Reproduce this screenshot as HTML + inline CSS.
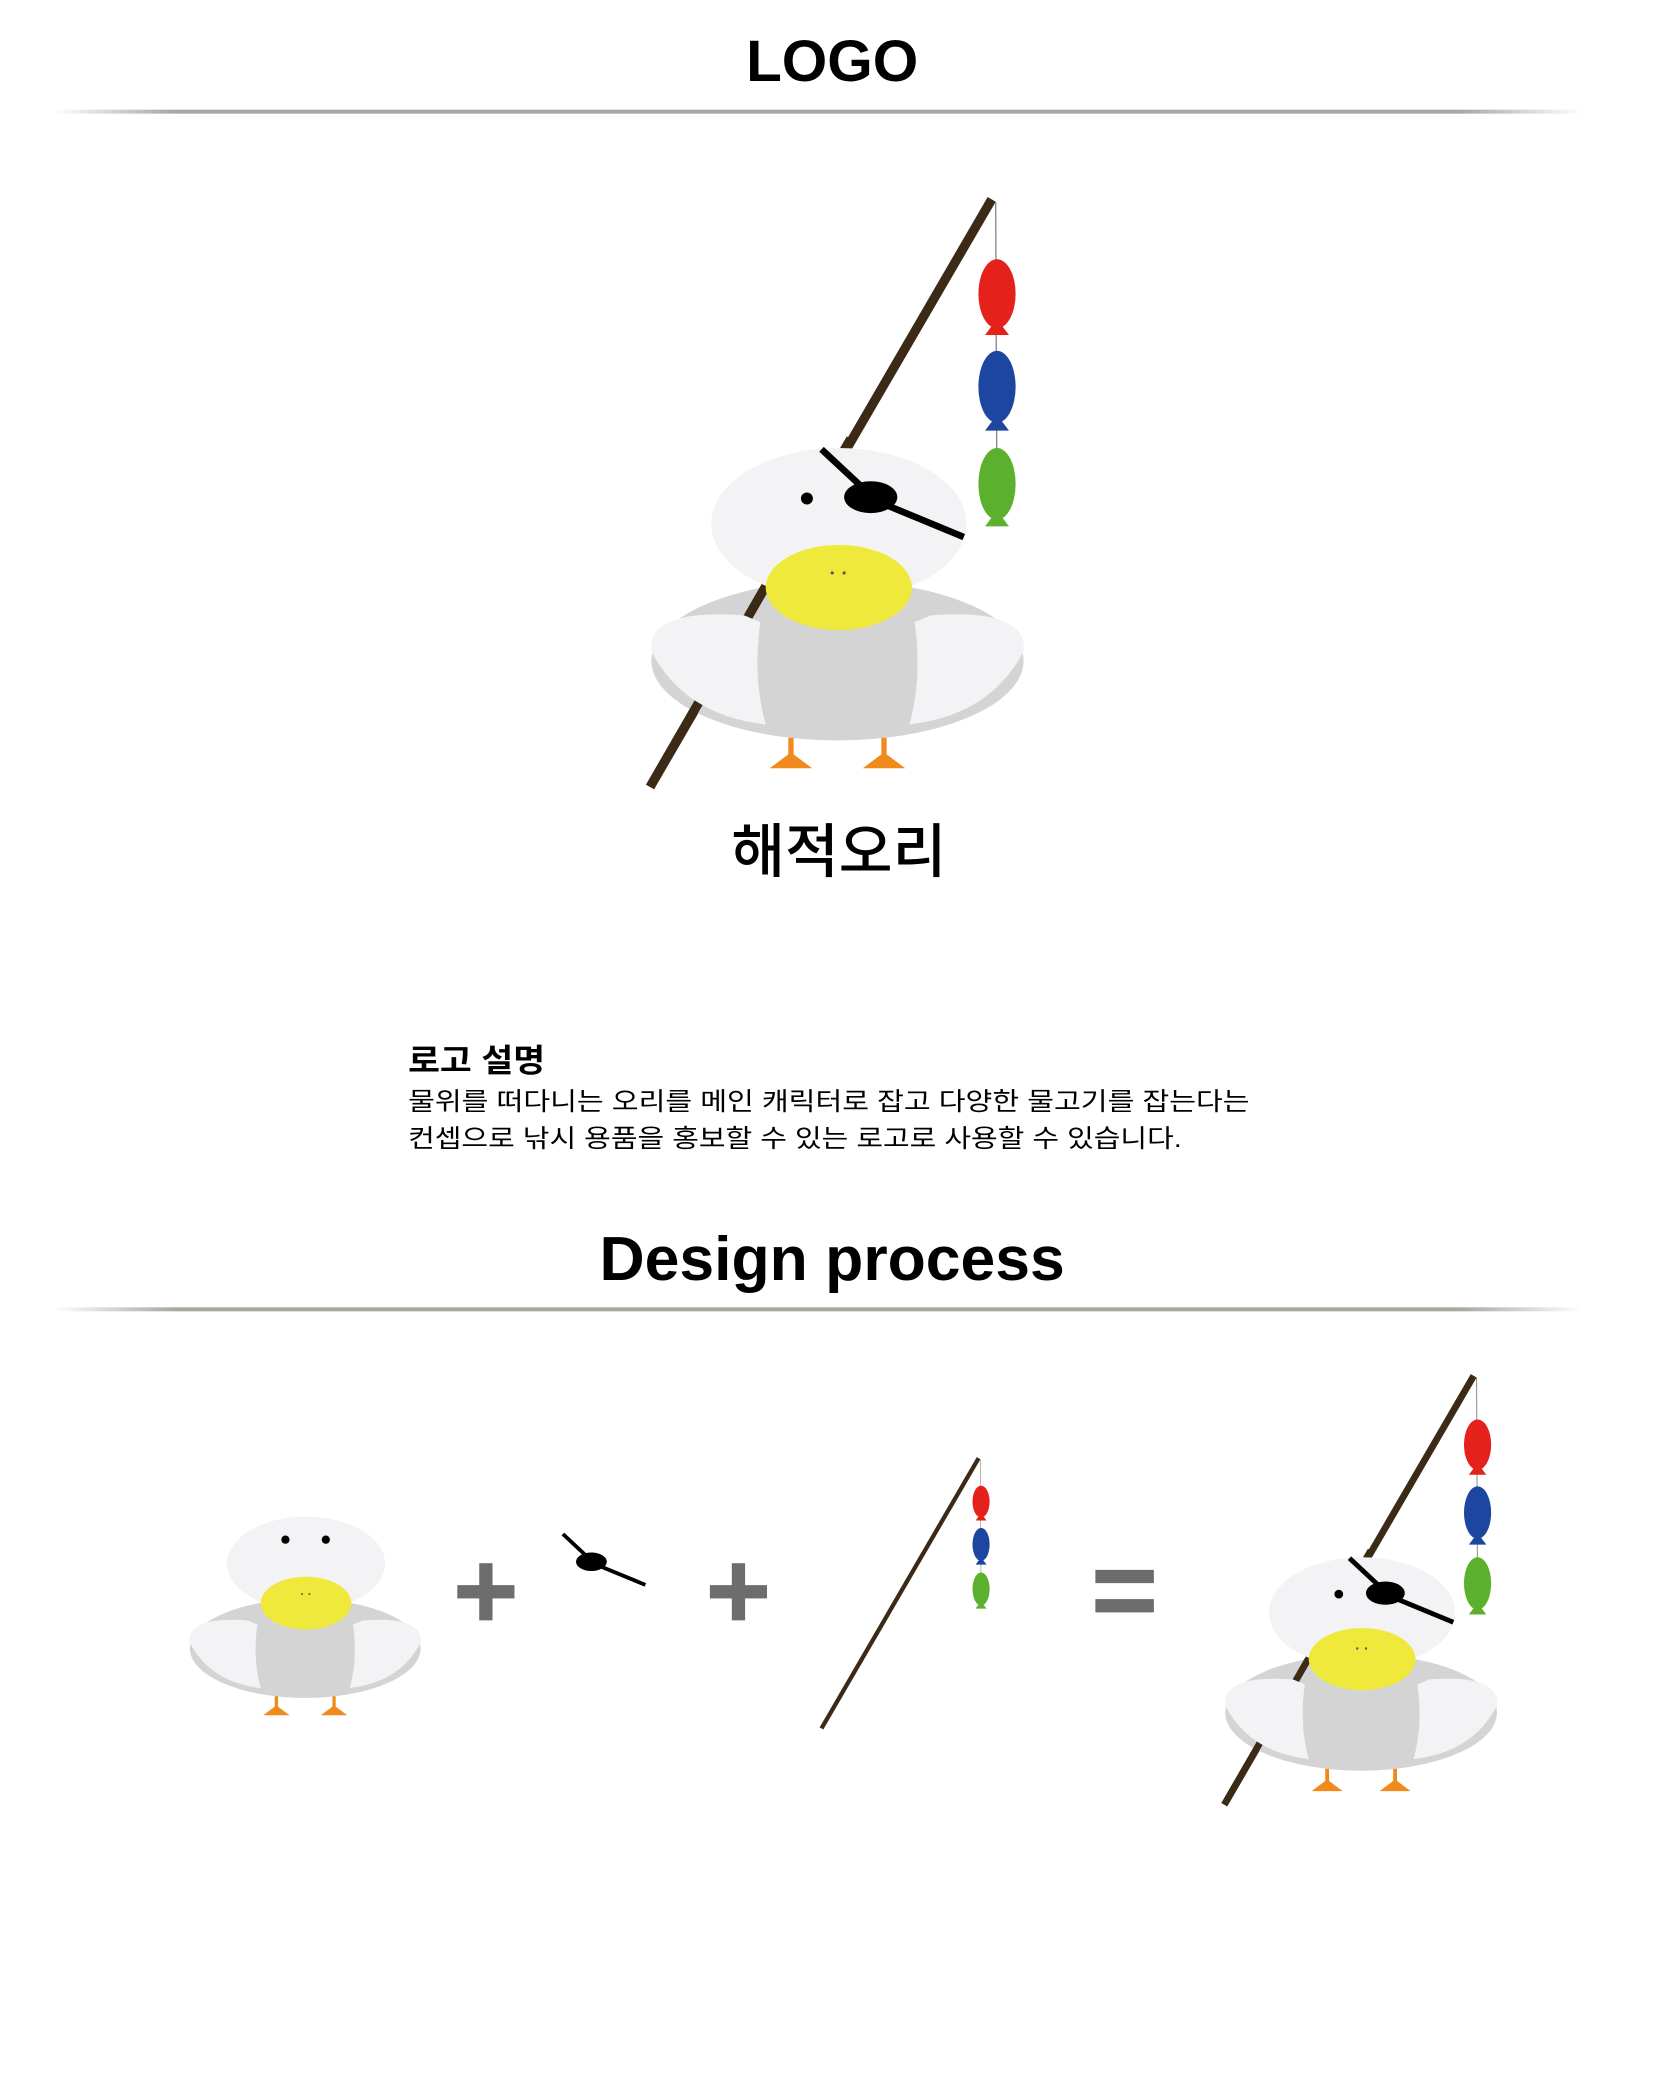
<!DOCTYPE html>
<html><head><meta charset="utf-8"><style>
html,body{margin:0;padding:0;background:#fff;}
svg{display:block;}
</style></head><body>
<svg width="1667" height="2086" viewBox="0 0 1254 1569.3" preserveAspectRatio="none" xmlns="http://www.w3.org/2000/svg">
<defs>
<linearGradient id="lg" x1="0" x2="1" y1="0" y2="0">
<stop offset="0" stop-color="#aaa6a0" stop-opacity="0"/>
<stop offset="0.08" stop-color="#aaa6a0"/>
<stop offset="0.92" stop-color="#aaa6a0"/>
<stop offset="1" stop-color="#aaa6a0" stop-opacity="0"/>
</linearGradient>
<g id="body">
<ellipse cx="630" cy="497" rx="140" ry="60" fill="#d4d4d4"/>
</g>
<g id="front">
<path d="M490,482 Q498,458 560,463 L572,468 Q566,510 576,545 Q515,538 490,490 Z" fill="#f3f3f5"/>
<path d="M770,482 Q762,458 700,463 L688,468 Q694,510 684,545 Q745,538 770,490 Z" fill="#f3f3f5"/>
<ellipse cx="631" cy="394" rx="96" ry="57" fill="#f3f3f5"/>
<ellipse cx="631" cy="442" rx="55" ry="32" fill="#efe93c"/>
<circle cx="626" cy="431" r="1.2" fill="#555"/><circle cx="635" cy="431" r="1.2" fill="#555"/>
<g fill="#f08a1c">
<rect x="593" y="555" width="4" height="15"/><path d="M579,578 L611,578 L595,566 Z"/>
<rect x="663" y="555" width="4" height="15"/><path d="M649,578 L681,578 L665,566 Z"/>
</g>
</g>
<g id="patch">
<line x1="618" y1="338" x2="648" y2="366" stroke="#000" stroke-width="5"/>
<line x1="662" y1="378" x2="725" y2="404" stroke="#000" stroke-width="5"/>
<ellipse cx="655" cy="374" rx="20" ry="12" fill="#000"/>
</g>
<g id="rod">
<line x1="746" y1="150" x2="489" y2="592" stroke="#3b2a15" stroke-width="7"/>
<line x1="749" y1="152" x2="750" y2="395" stroke="#888" stroke-width="1"/>
<g>
<ellipse cx="750" cy="221" rx="14" ry="26" fill="#e5211c"/><path d="M741,252 L759,252 L750,240 Z" fill="#e5211c"/>
<ellipse cx="750" cy="291" rx="14" ry="27" fill="#1c46a0"/><path d="M741,324 L759,324 L750,312 Z" fill="#1c46a0"/>
<ellipse cx="750" cy="364" rx="14" ry="27" fill="#5bb12d"/><path d="M741,396 L759,396 L750,384 Z" fill="#5bb12d"/>
</g>
</g>
<g id="full">
<use href="#body"/>
<line x1="640" y1="330" x2="489" y2="592" stroke="#3b2a15" stroke-width="7"/>
<use href="#front"/>
<circle cx="607" cy="375" r="4.5" fill="#000"/>
<use href="#patch"/>
</g>
</defs>

<text x="626" y="61" text-anchor="middle" font-family="Liberation Sans, sans-serif" font-weight="700" font-size="44">LOGO</text>
<rect x="40" y="82.5" width="1150" height="3" fill="url(#lg)"/>

<use href="#rod"/>
<use href="#full"/>
<text x="631" y="656" text-anchor="middle" font-family="Noto Sans CJK KR, sans-serif" font-weight="500" font-size="44">해적오리</text>

<text x="307" y="806" font-family="Liberation Sans, Noto Sans CJK KR, sans-serif" font-weight="700" font-size="24" textLength="103" lengthAdjust="spacingAndGlyphs">로고 설명</text>
<text x="307" y="835" font-family="Liberation Sans, Noto Sans CJK KR, sans-serif" font-size="19" textLength="633" lengthAdjust="spacingAndGlyphs">물위를 떠다니는 오리를 메인 캐릭터로 잡고 다양한 물고기를 잡는다는</text>
<text x="307" y="863" font-family="Liberation Sans, Noto Sans CJK KR, sans-serif" font-size="19" textLength="582" lengthAdjust="spacingAndGlyphs">컨셉으로 낚시 용품을 홍보할 수 있는 로고로 사용할 수 있습니다.</text>

<text x="626" y="963" text-anchor="middle" font-family="Liberation Sans, sans-serif" font-weight="700" font-size="47">Design process</text>
<rect x="40" y="983.5" width="1150" height="3" fill="url(#lg)"/>

<g transform="translate(-161,932) scale(0.62)">
<use href="#body"/><use href="#front"/>
<circle cx="606" cy="365" r="5" fill="#000"/><circle cx="655" cy="365" r="5" fill="#000"/>
</g>
<g fill="#6d6d6d">
<rect x="344" y="1192.5" width="43" height="10"/><rect x="360.5" y="1176" width="10" height="43"/>
<rect x="534" y="1192.5" width="43" height="10"/><rect x="550.5" y="1176" width="10" height="43"/>
<rect x="824" y="1181" width="44" height="10"/><rect x="824" y="1203" width="44" height="10"/>
</g>
<g transform="translate(65,958) scale(0.58)"><use href="#patch"/></g>
<g transform="translate(393,1028) scale(0.46)"><use href="#rod"/></g>
<g transform="translate(564,925.5) scale(0.73)"><use href="#rod"/><use href="#full"/></g>
</svg>
</body></html>
